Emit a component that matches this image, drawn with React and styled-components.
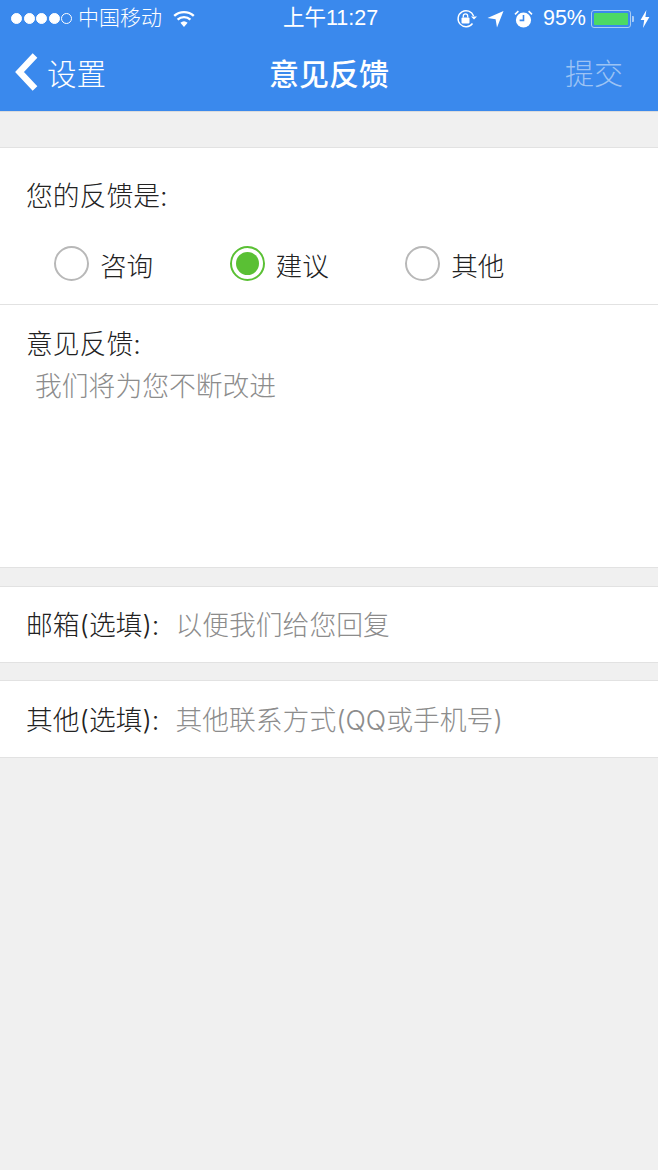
import React from "react";
import styled, { createGlobalStyle } from "styled-components";

const Global = createGlobalStyle`
  html, body { margin: 0; padding: 0; background: #f0f0f0; }
  * { box-sizing: border-box; }
  body { font-family: "Liberation Sans", "Noto Sans CJK SC", sans-serif; }
`;

const Page = styled.div`
  width: 658px;
  height: 1170px;
  overflow: hidden;
  background: #f0f0f0;
`;

const Header = styled.header`
  height: 112px;
  background: #3a89ed;
  border-bottom: 1px solid #dcdcdc;
  color: #fff;
`;

const StatusBar = styled.div`
  height: 37px;
  display: grid;
  grid-template-columns: 1fr auto 1fr;
  align-items: center;
  padding: 0 8px 0 11px;
  font-size: 21px;
`;

const StatusSide = styled.div`
  display: flex;
  align-items: center;
  justify-content: ${(p) => (p.$end ? "flex-end" : "flex-start")};
  white-space: nowrap;
`;

const Dot = styled.span`
  width: 11px;
  height: 11px;
  margin-right: 1.6px;
  border-radius: 50%;
  background: ${(p) => (p.$off ? "transparent" : "#fff")};
  border: 1px solid #fff;
`;

const Carrier = styled.span`
  margin-left: 4px;
  padding-bottom: 5px;
  font-family: "Noto Sans CJK SC", sans-serif;
  font-size: 21px;
  font-weight: 300;
`;

const Clock = styled.span`
  padding-bottom: 6px;
  font-size: 21.5px;
`;

const Percent = styled.span`
  margin: 0 5px 0 10px;
  font-size: 21.5px;
`;

const BatteryShell = styled.span`
  position: relative;
  width: 40px;
  height: 18px;
  padding: 2px;
  border: 1px solid #a9ccf5;
  border-radius: 3px;
  &::after {
    content: "";
    position: absolute;
    right: -4px;
    top: 5px;
    width: 2px;
    height: 6px;
    background: #a9ccf5;
    border-radius: 0 1px 1px 0;
  }
`;

const BatteryFill = styled.span`
  display: block;
  height: 100%;
  background: #4cd964;
  border-radius: 1px;
`;

const NavBar = styled.div`
  height: 74px;
  display: grid;
  grid-template-columns: 1fr auto 1fr;
  align-items: center;
  padding-bottom: 4px;
`;

const BackLink = styled.div`
  display: flex;
  align-items: center;
  gap: 9px;
  margin-left: 15px;
  font-size: 29.5px;
  font-weight: 300;
  font-family: "Noto Sans CJK SC", sans-serif;
`;

const Title = styled.div`
  font-family: "Noto Sans CJK SC", sans-serif;
  font-size: 30px;
  font-weight: 500;
`;

const Submit = styled.div`
  justify-self: end;
  margin-right: 35px;
  font-family: "Noto Sans CJK SC", sans-serif;
  font-size: 29px;
  font-weight: 300;
  color: #9cc3f4;
`;

const Section = styled.section`
  margin-top: ${(p) => p.$gap}px;
  background: #fff;
  border-top: 1px solid #e2e2e2;
  border-bottom: 1px solid #e2e2e2;
`;

const Label = styled.div`
  font-family: Inter, "Noto Sans CJK SC", sans-serif;
  font-size: 26.8px;
  line-height: 36px;
  font-weight: 300;
  color: #222;
`;

const ChoiceArea = styled.div`
  height: 157px;
  padding: 30px 0 0 26px;
  border-bottom: 1px solid #e2e2e2;
`;

const Choices = styled.div`
  display: flex;
  margin: 32px 0 0 28px;
`;

const Choice = styled.div`
  width: 175.6px;
  display: flex;
  align-items: center;
  gap: 11px;
  font-family: "Noto Sans CJK SC", sans-serif;
  font-size: 26.6px;
  line-height: 36px;
  font-weight: 300;
  color: #222;
`;

const Radio = styled.span`
  width: 35px;
  height: 35px;
  margin-bottom: 3px;
  display: flex;
  align-items: center;
  justify-content: center;
  border-radius: 50%;
  border: ${(p) => (p.$on ? "2px solid #5ac034" : "2px solid #b8b8b8")};
  &::after {
    content: "";
    display: ${(p) => (p.$on ? "block" : "none")};
    width: 23px;
    height: 23px;
    border-radius: 50%;
    background: #5ac034;
  }
`;

const FeedbackArea = styled.div`
  height: 262px;
  padding: 21px 0 0 26px;
`;

const Placeholder = styled.div`
  margin: 5px 0 0 9px;
  font-family: "Noto Sans CJK SC", sans-serif;
  font-size: 26.8px;
  line-height: 36px;
  font-weight: 300;
  color: #8c8c8c;
`;

const FieldRow = styled.div`
  height: ${(p) => p.$height}px;
  display: flex;
  align-items: center;
  padding: ${(p) => p.$top}px 0 0 26px;
`;

const FieldHint = styled.span`
  margin-left: 16px;
  font-family: Inter, "Noto Sans CJK SC", sans-serif;
  font-size: 26.8px;
  line-height: 36px;
  font-weight: 300;
  color: #8c8c8c;
`;

const Wifi = () => (
  <svg width="24" height="18" viewBox="0 0 24 18" style={{ marginLeft: 10 }}>
    <path d="M12 17l-3.6-4.2a5.4 5.4 0 0 1 7.2 0z" fill="#fff" />
    <path d="M5.6 9.6a9.6 9.6 0 0 1 12.8 0" stroke="#fff" strokeWidth="2.4" fill="none" />
    <path d="M2.2 5.9a14.6 14.6 0 0 1 19.6 0" stroke="#fff" strokeWidth="2.4" fill="none" />
  </svg>
);

const RotationLock = () => (
  <svg width="21" height="20" viewBox="0 0 21 20">
    <path d="M16.5 14.5A8 8 0 1 1 17.6 7" stroke="#fff" strokeWidth="1.4" fill="none" />
    <path d="M15 7.5h6l-3 3z" fill="#fff" />
    <rect x="5.5" y="8.5" width="8" height="6" rx="1" fill="#fff" />
    <path d="M7.3 8.5V7a2.2 2.2 0 0 1 4.4 0v1.5" stroke="#fff" strokeWidth="1.3" fill="none" />
  </svg>
);

const Location = () => (
  <svg width="17" height="18" viewBox="0 0 17 18" style={{ marginLeft: 10 }}>
    <path d="M16.5 1L10 17.5 8.6 9.2 0.5 8z" fill="#fff" />
  </svg>
);

const Alarm = () => (
  <svg width="19" height="18" viewBox="0 0 19 18" style={{ marginLeft: 10 }}>
    <circle cx="9.5" cy="10" r="7.6" fill="#fff" />
    <path d="M9.5 5v5.4H5.6" stroke="#3a89ed" strokeWidth="1.6" fill="none" />
    <path d="M1 4.4L4.4 1.2M18 4.4L14.6 1.2" stroke="#fff" strokeWidth="1.6" />
  </svg>
);

const Bolt = () => (
  <svg width="10" height="18" viewBox="0 0 10 18" style={{ marginLeft: 9 }}>
    <path d="M6.4 0L0.6 10h3.6L3 18l6.4-11H5.4z" fill="#fff" />
  </svg>
);

const BackArrow = () => (
  <svg width="23" height="38" viewBox="0 0 23 38">
    <path d="M20 2.5L4.5 19 20 35.5" stroke="#fff" strokeWidth="6.4" fill="none" />
  </svg>
);

const App = () => {
  const kinds = [
    { name: "咨询" },
    { name: "建议", on: true },
    { name: "其他" },
  ];

  return (
    <Page>
      <Global />
      <Header>
        <StatusBar>
          <StatusSide>
            <Dot />
            <Dot />
            <Dot />
            <Dot />
            <Dot $off />
            <Carrier>中国移动</Carrier>
            <Wifi />
          </StatusSide>
          <Clock>上午11:27</Clock>
          <StatusSide $end>
            <RotationLock />
            <Location />
            <Alarm />
            <Percent>95%</Percent>
            <BatteryShell>
              <BatteryFill />
            </BatteryShell>
            <Bolt />
          </StatusSide>
        </StatusBar>
        <NavBar>
          <BackLink>
            <BackArrow />
            设置
          </BackLink>
          <Title>意见反馈</Title>
          <Submit>提交</Submit>
        </NavBar>
      </Header>

      <Section $gap={35}>
        <ChoiceArea>
          <Label>您的反馈是:</Label>
          <Choices>
            {kinds.map((k) => (
              <Choice key={k.name}>
                <Radio $on={k.on} />
                {k.name}
              </Choice>
            ))}
          </Choices>
        </ChoiceArea>
        <FeedbackArea>
          <Label>意见反馈:</Label>
          <Placeholder>我们将为您不断改进</Placeholder>
        </FeedbackArea>
      </Section>

      <Section $gap={18}>
        <FieldRow $height={75} $top={0}>
          <Label>邮箱(选填):</Label>
          <FieldHint>以便我们给您回复</FieldHint>
        </FieldRow>
      </Section>

      <Section $gap={17}>
        <FieldRow $height={76} $top={2}>
          <Label>其他(选填):</Label>
          <FieldHint>其他联系方式(QQ或手机号)</FieldHint>
        </FieldRow>
      </Section>
    </Page>
  );
};

export default App;
